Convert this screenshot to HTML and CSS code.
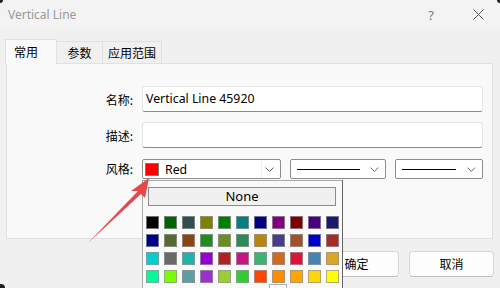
FILE: index.html
```html
<!DOCTYPE html>
<html>
<head>
<meta charset="utf-8">
<link rel="stylesheet" href="styles.css">
</head>
<body>
<div class="window">
  <div class="titlebar">
    <span class="title">Vertical Line</span>
    <div class="tb-icons">
      <span class="help">?</span>
      <svg class="close" width="11" height="11" viewBox="0 0 11 11"><path d="M0.5 0.5L10.5 10.5M10.5 0.5L0.5 10.5" stroke="#555" stroke-width="1" fill="none"/></svg>
    </div>
  </div>
  <div class="content">
    <div class="tabs">
      <div class="tab active">常用</div>
      <div class="tab t2">参数</div>
      <div class="tab t3">应用范围</div>
    </div>
    <div class="panel">
      <div class="form">
        <label class="lbl">名称:</label>
        <div class="input">Vertical Line 45920</div>
        <label class="lbl">描述:</label>
        <div class="input"></div>
        <label class="lbl">风格:</label>
        <div class="combos">
          <div class="combo c1">
            <span class="swatch-red"></span>
            <span class="ctext">Red</span>
            <span class="sep"></span>
            <svg class="chev" width="9" height="5" viewBox="0 0 9 5"><path d="M0.5 0.5L4.5 4.5L8.5 0.5" stroke="#606060" fill="none"/></svg>
          </div>
          <div class="combo c2">
            <span class="line l2"></span>
            <svg class="chev" width="9" height="5" viewBox="0 0 9 5"><path d="M0.5 0.5L4.5 4.5L8.5 0.5" stroke="#606060" fill="none"/></svg>
          </div>
          <div class="combo c3">
            <span class="line l3"></span>
            <svg class="chev" width="9" height="5" viewBox="0 0 9 5"><path d="M0.5 0.5L4.5 4.5L8.5 0.5" stroke="#606060" fill="none"/></svg>
          </div>
        </div>
      </div>
    </div>
    <div class="buttons">
      <div class="btn">确定</div>
      <div class="btn">取消</div>
    </div>
  </div>

  <div class="popup">
    <div class="none-btn">None</div>
    <div class="grid">
      <span class="sw" style="background:#000000"></span>
      <span class="sw" style="background:#006400"></span>
      <span class="sw" style="background:#2F4F4F"></span>
      <span class="sw" style="background:#808000"></span>
      <span class="sw" style="background:#008000"></span>
      <span class="sw" style="background:#008080"></span>
      <span class="sw" style="background:#000080"></span>
      <span class="sw" style="background:#800080"></span>
      <span class="sw" style="background:#800000"></span>
      <span class="sw" style="background:#4B0082"></span>
      <span class="sw" style="background:#191970"></span>
      <span class="sw" style="background:#00008B"></span>
      <span class="sw" style="background:#556B2F"></span>
      <span class="sw" style="background:#8B4513"></span>
      <span class="sw" style="background:#228B22"></span>
      <span class="sw" style="background:#6B8E23"></span>
      <span class="sw" style="background:#2E8B57"></span>
      <span class="sw" style="background:#B8860B"></span>
      <span class="sw" style="background:#483D8B"></span>
      <span class="sw" style="background:#A0522D"></span>
      <span class="sw" style="background:#0000CD"></span>
      <span class="sw" style="background:#A52A2A"></span>
      <span class="sw" style="background:#00CED1"></span>
      <span class="sw" style="background:#696969"></span>
      <span class="sw" style="background:#20B2AA"></span>
      <span class="sw" style="background:#9400D3"></span>
      <span class="sw" style="background:#B22222"></span>
      <span class="sw" style="background:#C71585"></span>
      <span class="sw" style="background:#3CB371"></span>
      <span class="sw" style="background:#D2691E"></span>
      <span class="sw" style="background:#DC143C"></span>
      <span class="sw" style="background:#4682B4"></span>
      <span class="sw" style="background:#DAA520"></span>
      <span class="sw" style="background:#00FA9A"></span>
      <span class="sw" style="background:#7CFC00"></span>
      <span class="sw" style="background:#5F9EA0"></span>
      <span class="sw" style="background:#9932CC"></span>
      <span class="sw" style="background:#9ACD32"></span>
      <span class="sw" style="background:#32CD32"></span>
      <span class="sw" style="background:#FF4500"></span>
      <span class="sw" style="background:#FF8C00"></span>
      <span class="sw" style="background:#FFA500"></span>
      <span class="sw" style="background:#FFD700"></span>
      <span class="sw" style="background:#FFFF00"></span>
    </div>
    <div class="more-box"></div>
  </div>

  <svg class="arrow" width="500" height="288" viewBox="0 0 500 288">
    <polygon points="149,178 131,191 138,191 88,243 141,194 145,198" fill="#e8474a"/>
  </svg>
  <span class="corner tl"></span>
  <span class="corner tr"></span>
  <span class="corner bl"></span>
</div>
</body>
</html>
```

FILE: styles.css
```css
* { box-sizing: border-box; }
html, body { margin: 0; padding: 0; }
body {
  width: 500px;
  height: 288px;
  overflow: hidden;
  background: #f0f0f0;
  font-family: "Segoe UI", "Noto Sans", "Noto Sans CJK SC", sans-serif;
  font-size: 12px;
  color: #000;
}
.window {
  position: relative;
  width: 500px;
  height: 288px;
  background: #f0f0f0;
}
.titlebar {
  height: 29px;
  background: #f3f3f3;
  display: flex;
  align-items: center;
  justify-content: space-between;
  padding-left: 8px;
}
.title {
  color: #999;
  font-size: 12px;
  line-height: 16px;
}
.tb-icons {
  display: flex;
  align-items: center;
}
.help {
  color: #777;
  font-size: 13px;
  margin-right: 39px;
}
.close { margin-right: 16px; }
.content {
  padding: 10px 0 0 0;
}
.tabs {
  display: flex;
  align-items: flex-end;
  padding-left: 5px;
  height: 25px;
  position: relative;
  z-index: 1;
}
.tab {
  height: 22px;
  border: 1px solid #e0e0e0;
  border-bottom: none;
  background: #f0f0f0;
  font-family: "Noto Sans CJK SC", sans-serif;
  font-size: 12px;
  line-height: 22px;
  text-align: center;
  margin-bottom: 1px;
}
.tab.active {
  width: 52px;
  height: 25px;
  background: #f9f9f9;
  line-height: 24px;
  margin-bottom: 0;
  text-align: left;
  padding-left: 8px;
}
.t2 { width: 46px; border-left: none; }
.t3 { width: 59px; border-left: none; }
.panel {
  margin-left: 6px;
  width: 487px;
  height: 176px;
  margin-top: -1px;
  background: #f9f9f9;
  border: 1px solid #e0e0e0;
  padding: 22px 10px 0 0;
}
.form {
  display: grid;
  grid-template-columns: 126px 1fr;
  column-gap: 9px;
  row-gap: 10px;
}
.lbl {
  font-family: "Noto Sans CJK SC", sans-serif;
  text-align: right;
  align-self: center;
  font-size: 12px;
}
.input {
  height: 26px;
  background: #fff;
  border: 1px solid #e4e4e4;
  border-bottom: 1px solid #8a8a8a;
  border-radius: 3px;
  padding-left: 3px;
  line-height: 23px;
  font-size: 12.3px;
}
.combos {
  display: flex;
  gap: 9px;
  margin-top: 1px;
}
.combo {
  height: 20px;
  background: #fff;
  border: 1px solid #8c8c8c;
  border-radius: 2px;
  display: flex;
  align-items: center;
  position: relative;
}
.c1 { width: 139px; }
.c2 { width: 96px; }
.c3 { width: 88px; }
.swatch-red {
  width: 14px;
  height: 13px;
  background: #ff0000;
  border: 1px solid #7a7a7a;
  margin-left: 2px;
  margin-right: 6px;
}
.ctext { font-size: 12.3px; flex: 1; }
.sep {
  width: 1px;
  align-self: stretch;
  background: #f0f0f0;
  margin-right: 3px;
}
.chev { margin-right: 6px; }
.line {
  height: 1px;
  background: #000;
  margin-left: 6px;
}
.l2 { width: 65px; margin-right: 10px; }
.l3 { width: 57px; margin-right: 11px; }
.buttons {
  display: flex;
  justify-content: flex-end;
  gap: 10px;
  padding-right: 6px;
  margin-top: 12px;
}
.btn {
  width: 85px;
  height: 26px;
  background: #fdfdfd;
  border: 1px solid #d6d6d6;
  border-bottom-color: #c0c0c0;
  border-radius: 4px;
  text-align: center;
  line-height: 24px;
  font-family: "Noto Sans CJK SC", sans-serif;
  font-size: 12px;
}
.popup {
  position: absolute;
  left: 142px;
  top: 180px;
  width: 201px;
  height: 110px;
  background: #f9f9f9;
  border-left: 1px solid #a8a8a8;
  border-top: 1px solid #a8a8a8;
  border-right: 1px solid #646464;
  padding: 6px 0 0 3px;
}
.none-btn {
  width: 188px;
  height: 19px;
  margin-left: 2px;
  background: #f0f0f0;
  border: 1px solid #8c8c8c;
  text-align: center;
  line-height: 17px;
  font-size: 13px;
}
.grid {
  display: grid;
  grid-template-columns: repeat(11, 13px);
  gap: 5px;
  margin-top: 10px;
}
.sw {
  width: 13px;
  height: 13px;
  border: 1px solid rgba(150,150,150,0.75);
}
.more-box {
  position: absolute;
  left: 126px;
  top: 103px;
  width: 18px;
  height: 10px;
  background: #fff;
  border: 1px solid #b0b0b0;
}
.arrow {
  position: absolute;
  left: 0;
  top: 0;
  pointer-events: none;
}
.corner {
  position: absolute;
  width: 4px;
  height: 4px;
  background: #222;
}
.corner.tl { left: 0; top: 0; width: 3px; height: 3px; border-bottom-right-radius: 3px; }
.corner.tr { right: 0; top: 0; width: 3px; height: 3px; border-bottom-left-radius: 3px; }
.corner.bl { left: 0; bottom: 0; width: 5px; height: 4px; border-top-right-radius: 4px; }
```
